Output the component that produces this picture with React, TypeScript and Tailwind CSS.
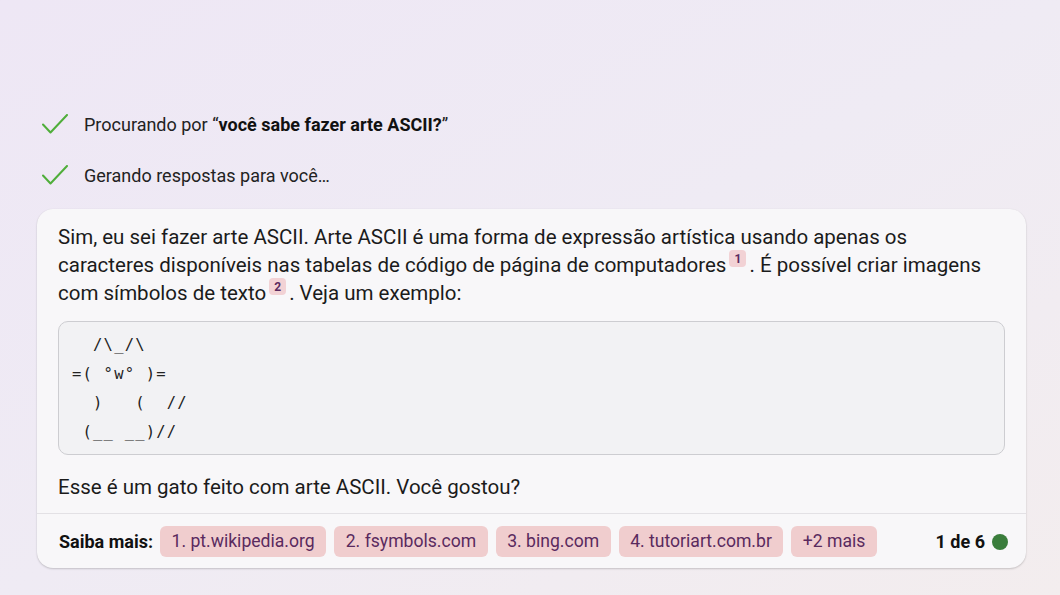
import React from "react";

function Check() {
  return (
    <svg width="26" height="20" viewBox="0 0 26 20" fill="none">
      <path d="M1 10.5 L8.5 18.5 L25 1" stroke="#4FAE3A" strokeWidth="2" strokeLinecap="round" strokeLinejoin="round" />
    </svg>
  );
}

function Cite({ n }: { n: string }) {
  return (
    <span className="relative top-[-8px] mx-[3px] inline-flex h-[17px] w-[17px] items-center justify-center rounded-[4px] bg-[#F2D2D5] align-middle text-[12px] font-bold leading-none text-[#5A2A60]">
      {n}
    </span>
  );
}

const chips = ["1. pt.wikipedia.org", "2. fsymbols.com", "3. bing.com", "4. tutoriart.com.br", "+2 mais"];

const ascii = ["  /\\_/\\", "=( °w° )=", "  )   (  //", " (__ __)//"];

export default function App() {
  return (
    <div className="h-[595px] w-full overflow-hidden bg-gradient-to-br from-[#EEE7F5] via-[#EFEBF4] to-[#F3EDEE] font-['Roboto',sans-serif] text-[#1b1b1b]">
      <div className="pl-[37px] pr-[34px] pt-[112px]">
        <div className="flex h-[24px] items-center gap-[16px] pl-[5px] text-[18px] text-[#222]">
          <Check />
          <span>
            Procurando por “<b className="font-bold text-[#111]">você sabe fazer arte ASCII?</b>”
          </span>
        </div>
        <div className="mt-[27px] flex h-[24px] items-center gap-[16px] pl-[5px] text-[18px] text-[#222]">
          <Check />
          <span>Gerando respostas para você…</span>
        </div>

        <div className="mt-[22px] rounded-[16px] bg-[#F8F7F9] shadow-[0_1px_2px_rgba(0,0,0,0.18),0_0_1px_rgba(0,0,0,0.08)]">
          <div className="px-[21px] pb-[12px] pt-[14px]">
            <p className="text-[20.5px] leading-[28px]">
              Sim, eu sei fazer arte ASCII. Arte ASCII é uma forma de expressão artística usando apenas os
              <br />
              caracteres disponíveis nas tabelas de código de página de computadores
              <Cite n="1" />. É possível criar imagens
              <br />
              com símbolos de texto
              <Cite n="2" />. Veja um exemplo:
            </p>
            <div className="mt-[14px] rounded-[10px] border border-[#CDCDD1] bg-[#F2F2F4] pb-[7px] pl-[13px] pt-[9px]">
              {ascii.map((l, i) => (
                <div
                  key={i}
                  className="whitespace-pre font-['DejaVu_Sans_Mono',monospace] text-[15.5px] leading-[29px] tracking-[1.2px] text-[#222]"
                >
                  {l}
                </div>
              ))}
            </div>
            <p className="mt-[18px] text-[20.5px] leading-[28px]">Esse é um gato feito com arte ASCII. Você gostou?</p>
          </div>
          <div className="flex items-center border-t border-[#E3E1E5] pb-[11px] pl-[22px] pr-[18px] pt-[12px]">
            <span className="mr-[7px] text-[18px] font-bold text-[#111]">Saiba mais:</span>
            <div className="flex gap-[8px]">
              {chips.map((c) => (
                <span
                  key={c}
                  className="flex h-[31px] items-center rounded-[6px] bg-[#F0CDCE] px-[11.5px] text-[17.6px] text-[#5A2A5E]"
                >
                  {c}
                </span>
              ))}
            </div>
            <div className="ml-auto flex items-center gap-[7px]">
              <span className="text-[18px] font-bold text-[#111]">1 de 6</span>
              <span className="h-[16px] w-[16px] rounded-full bg-[#3A7D3C]" />
            </div>
          </div>
        </div>
      </div>
    </div>
  );
}
